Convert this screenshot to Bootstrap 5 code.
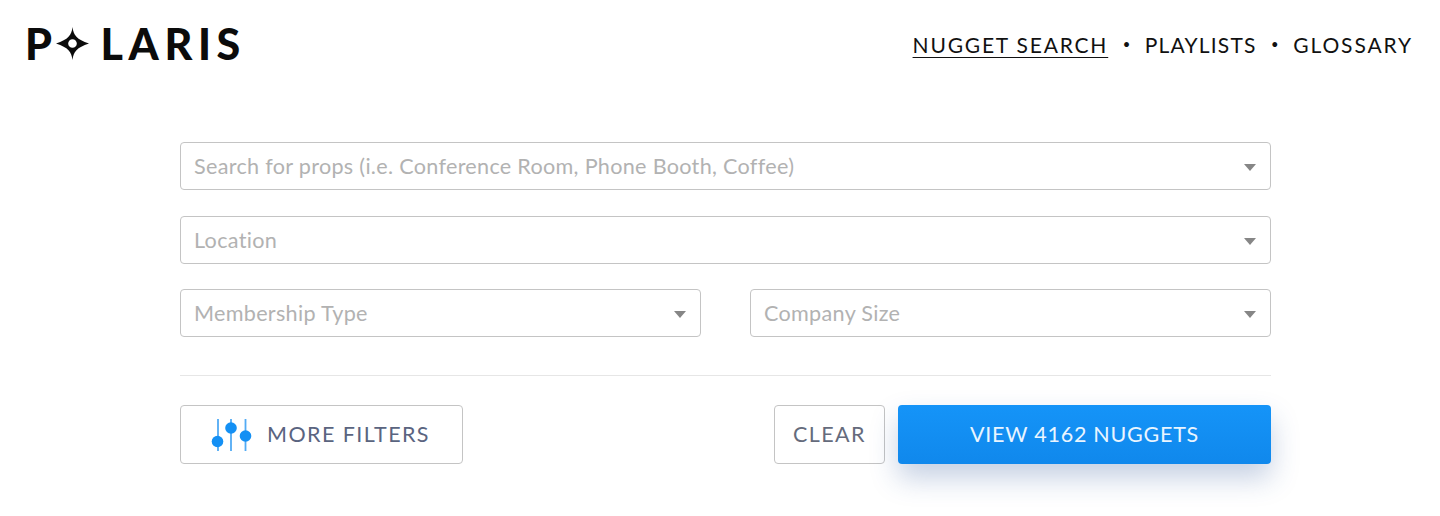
<!DOCTYPE html>
<html lang="en">
<head>
<meta charset="utf-8">
<title>Polaris</title>
<link rel="stylesheet" href="https://cdn.jsdelivr.net/npm/bootstrap@5.3.0/dist/css/bootstrap.min.css">
<style>
html,body{height:516px;overflow:hidden;background:#fff;font-family:Lato,"Noto Sans",sans-serif}
.top-bar{height:88px;padding:0 27px 0 27px}
.brand-logo{font-family:Lato,sans-serif;font-weight:900;font-size:43px;line-height:1;color:#0b0b0b;letter-spacing:5.6px;text-decoration:none;margin:-2px 0 0 -2px}
.brand-logo svg{width:33px;height:33px;margin:0 12px 0 -2px;display:block}
.top-links{font-size:21px;letter-spacing:1.55px;color:#111;padding-top:1px}
.top-links a{color:#111;text-decoration:none}
.top-links a.is-current{letter-spacing:1.8px;text-decoration:underline;text-underline-offset:4px;text-decoration-thickness:1px}
.top-links a.is-tight{letter-spacing:1.2px}
.top-links a.is-wide{letter-spacing:1.9px}
.top-sep{font-size:13px;margin:0 14.5px;letter-spacing:0}
.search-area{width:1091px;margin:54px 0 0 180px}
.pick{height:48px;border:1px solid #c4c4c4;border-radius:4px;padding:0 14px 0 13px;color:#b2b2b2;font-size:21.6px;letter-spacing:.3px;background:#fff}
.pick-caret{width:0;height:0;border-left:6.5px solid transparent;border-right:6.5px solid transparent;border-top:7px solid #868686;margin-top:3px}
.pick-gap{margin-bottom:26px}
.pick-row{gap:49px;margin-top:-1px}
.pick-row .pick{flex:1 1 0}
.rule-line{height:1px;background:#e6e6e6;margin:38px 0 29px}
.act{height:59px;border:1px solid #c4c4c4;border-radius:4px;background:#fff;color:#5a6480;font-size:21.5px;letter-spacing:1.4px;padding:0 0 1px;font-weight:400}
.act-more{width:283px}
.act-more svg{width:42px;height:36px;margin:1px 14px 0 -2px}
.act-clear{width:111px;color:#656b7c;letter-spacing:1.4px}
.act-view{width:373px;margin-left:13px;background:linear-gradient(#1594f8,#1088ec);border:0;color:#e9f5ff;letter-spacing:.75px;box-shadow:0 14px 28px rgba(40,80,150,.27)}
</style>
</head>
<body>
<header class="top-bar d-flex justify-content-between align-items-center">
  <a class="brand-logo d-flex align-items-center" href="#">P<svg viewBox="0 0 32 32" aria-hidden="true"><path fill-rule="evenodd" fill="#0b0b0b" d="M16 0C17 8 20 12 32 16C20 20 17 24 16 32C15 24 12 20 0 16C12 12 15 8 16 0ZM16 11.800A4.200 4.200 0 1 0 16 20.200A4.200 4.200 0 1 0 16 11.800Z"/></svg>LARIS</a>
  <nav class="top-links d-flex align-items-center">
    <a class="is-current" href="#">NUGGET SEARCH</a><span class="top-sep">•</span><a class="is-tight" href="#">PLAYLISTS</a><span class="top-sep">•</span><a class="is-wide" href="#">GLOSSARY</a>
  </nav>
</header>
<main class="search-area">
  <div class="pick pick-gap d-flex justify-content-between align-items-center"><span>Search for props (i.e. Conference Room, Phone Booth, Coffee)</span><span class="pick-caret"></span></div>
  <div class="pick pick-gap d-flex justify-content-between align-items-center"><span>Location</span><span class="pick-caret"></span></div>
  <div class="pick-row d-flex">
    <div class="pick d-flex justify-content-between align-items-center"><span>Membership Type</span><span class="pick-caret"></span></div>
    <div class="pick d-flex justify-content-between align-items-center"><span>Company Size</span><span class="pick-caret"></span></div>
  </div>
  <div class="rule-line"></div>
  <div class="d-flex align-items-start">
    <button type="button" class="btn act act-more d-flex align-items-center justify-content-center">
      <svg viewBox="0 0 42 36" aria-hidden="true"><g stroke="#52abf4" stroke-width="1.8"><path d="M7 2V34M20 2V34M34.500 2V34"/></g><g fill="#1490f4"><circle cx="6.500" cy="24.500" r="5.800"/><circle cx="20" cy="11" r="5.800"/><circle cx="34.500" cy="19" r="5.800"/></g></svg>
      <span>MORE FILTERS</span>
    </button>
    <button type="button" class="btn act act-clear ms-auto">CLEAR</button>
    <button type="button" class="btn act act-view">VIEW 4162 NUGGETS</button>
  </div>
</main>
</body>
</html>
